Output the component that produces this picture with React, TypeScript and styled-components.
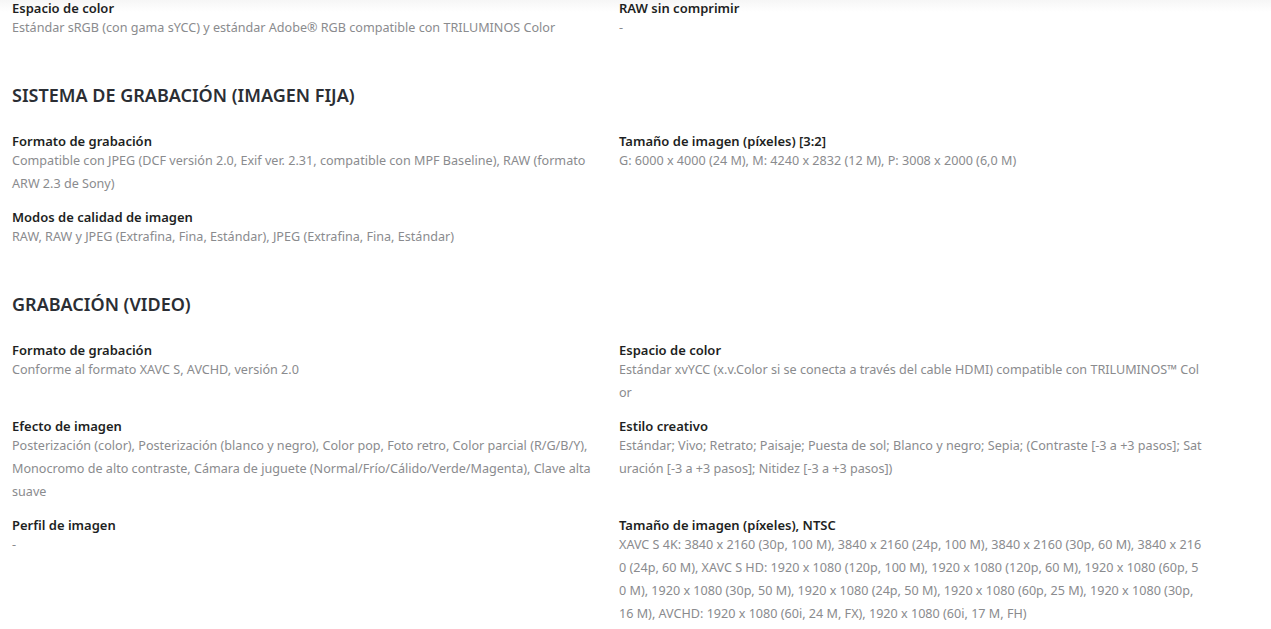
import React from 'react'
import styled, { createGlobalStyle } from 'styled-components'

const GlobalStyle = createGlobalStyle`
  html, body {
    margin: 0;
    padding: 0;
    background: linear-gradient(180deg, #f6f6f6 0px, #ffffff 12px) no-repeat, #ffffff;
  }
  body {
    font-family: "Noto Sans", "Open Sans", sans-serif;
    -webkit-font-smoothing: antialiased;
  }
`

const Page = styled.div`
  padding: 0 12px 40px;
  width: 1194px;
`

const Section = styled.section`
  & + & {
    padding-top: 44px;
  }
`

const Heading = styled.h2`
  margin: 0 0 26px;
  font-size: 18px;
  line-height: 24px;
  font-weight: 600;
  color: #2b2e34;
`

const Grid = styled.div`
  display: grid;
  grid-template-columns: 583px 583px;
  column-gap: 24px;
  row-gap: 14px;
  align-items: start;
`

const Label = styled.h3`
  margin: 0;
  font-size: 13px;
  line-height: 16px;
  font-weight: 600;
  color: #1e1f23;
`

const Value = styled.p`
  margin: 0;
  font-size: 12.6px;
  line-height: 23px;
  color: #8a8b8e;
  word-break: break-all;
`

type Spec = { label: string; value?: string }

const Item = ({ label, value }: Spec) => (
  <div>
    <Label>{label}</Label>
    <Value>{value ?? '-'}</Value>
  </div>
)

const sections: { title?: string; specs: Spec[] }[] = [
  {
    specs: [
      {
        label: 'Espacio de color',
        value: 'Estándar sRGB (con gama sYCC) y estándar Adobe® RGB compatible con TRILUMINOS Color',
      },
      { label: 'RAW sin comprimir' },
    ],
  },
  {
    title: 'SISTEMA DE GRABACIÓN (IMAGEN FIJA)',
    specs: [
      {
        label: 'Formato de grabación',
        value:
          'Compatible con JPEG (DCF versión 2.0, Exif ver. 2.31, compatible con MPF Baseline), RAW (formato ARW 2.3 de Sony)',
      },
      {
        label: 'Tamaño de imagen (píxeles) [3:2]',
        value: 'G: 6000 x 4000 (24 M), M: 4240 x 2832 (12 M), P: 3008 x 2000 (6,0 M)',
      },
      {
        label: 'Modos de calidad de imagen',
        value: 'RAW, RAW y JPEG (Extrafina, Fina, Estándar), JPEG (Extrafina, Fina, Estándar)',
      },
    ],
  },
  {
    title: 'GRABACIÓN (VIDEO)',
    specs: [
      { label: 'Formato de grabación', value: 'Conforme al formato XAVC S, AVCHD, versión 2.0' },
      {
        label: 'Espacio de color',
        value: 'Estándar xvYCC (x.v.Color si se conecta a través del cable HDMI) compatible con TRILUMINOS™ Color',
      },
      {
        label: 'Efecto de imagen',
        value:
          'Posterización (color), Posterización (blanco y negro), Color pop, Foto retro, Color parcial (R/G/B/Y), Monocromo de alto contraste, Cámara de juguete (Normal/Frío/Cálido/Verde/Magenta), Clave alta suave',
      },
      {
        label: 'Estilo creativo',
        value:
          'Estándar; Vivo; Retrato; Paisaje; Puesta de sol; Blanco y negro; Sepia; (Contraste [-3 a +3 pasos]; Saturación [-3 a +3 pasos]; Nitidez [-3 a +3 pasos])',
      },
      { label: 'Perfil de imagen' },
      {
        label: 'Tamaño de imagen (píxeles), NTSC',
        value:
          'XAVC S 4K: 3840 x 2160 (30p, 100 M), 3840 x 2160 (24p, 100 M), 3840 x 2160 (30p, 60 M), 3840 x 2160 (24p, 60 M), XAVC S HD: 1920 x 1080 (120p, 100 M), 1920 x 1080 (120p, 60 M), 1920 x 1080 (60p, 50 M), 1920 x 1080 (30p, 50 M), 1920 x 1080 (24p, 50 M), 1920 x 1080 (60p, 25 M), 1920 x 1080 (30p, 16 M), AVCHD: 1920 x 1080 (60i, 24 M, FX), 1920 x 1080 (60i, 17 M, FH)',
      },
    ],
  },
]

const App = () => (
  <>
    <GlobalStyle />
    <Page>
      {sections.map((section, i) => (
        <Section key={i}>
          {section.title && <Heading>{section.title}</Heading>}
          <Grid>
            {section.specs.map((spec, j) => (
              <Item key={j} {...spec} />
            ))}
          </Grid>
        </Section>
      ))}
    </Page>
  </>
)

export default App
